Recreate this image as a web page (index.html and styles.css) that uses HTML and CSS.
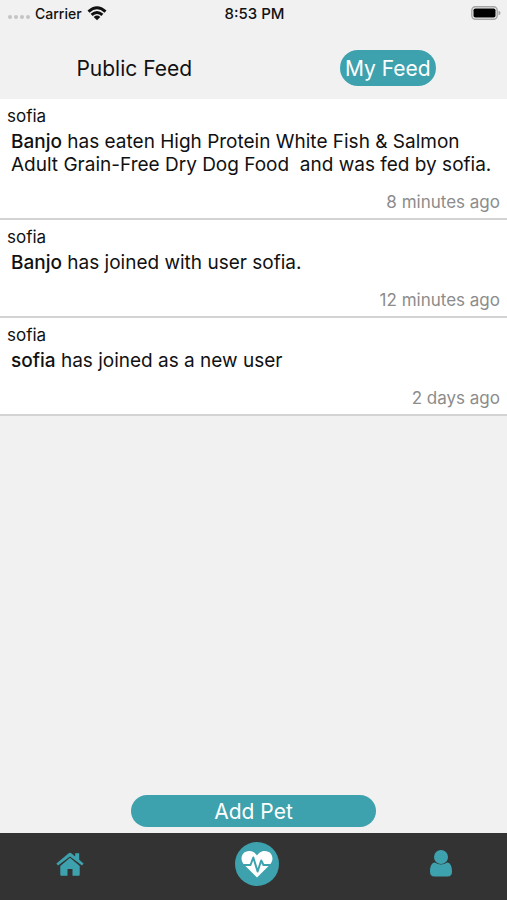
FILE: index.html
```html
<!DOCTYPE html>
<html lang="en">
<head>
<meta charset="utf-8">
<meta name="viewport" content="width=device-width, initial-scale=1">
<title>My Feed</title>
<link rel="stylesheet" href="styles.css">
</head>
<body>
<div class="status">
  <div class="carrier">
    <span class="dots"><i></i><i></i><i></i><i></i></span>
    <span>Carrier</span>
    <svg class="wifi" viewBox="0 0 20 15" aria-hidden="true">
      <path d="M1.500 5.600Q10-2.200 18.500 5.600M4.600 8.900Q10 4 15.400 8.900" fill="none" stroke="#111" stroke-width="3"/>
      <path d="M6.700 10.900Q10 8.100 13.300 10.900L10 14.200Z" fill="#111"/>
    </svg>
  </div>
  <span class="time">8:53 PM</span>
  <svg class="battery" viewBox="0 0 30 14" aria-hidden="true">
    <rect x="0.800" y="0.800" width="25.400" height="12.400" rx="3.600" fill="#f1f1f1" stroke="#a5a5a5" stroke-width="1.400"/>
    <rect x="2.500" y="2.500" width="22" height="9" rx="1.800" fill="#000"/>
    <path d="M27.500 4.800Q29.500 5.200 29.500 7T27.500 9.200Z" fill="#a5a5a5"/>
  </svg>
</div>
<header class="tabs">
  <button class="tab" type="button">Public Feed</button>
  <button class="tab active" type="button">My Feed</button>
</header>
<main class="feed">
  <article class="post">
    <div class="name">sofia</div>
    <p class="message"><b>Banjo</b> has eaten High Protein White Fish &amp; Salmon Adult Grain-Free Dry Dog Food&nbsp; and was fed by sofia.</p>
    <div class="ago">8 minutes ago</div>
  </article>
  <article class="post">
    <div class="name">sofia</div>
    <p class="message"><b>Banjo</b> has joined with user sofia.</p>
    <div class="ago">12 minutes ago</div>
  </article>
  <article class="post">
    <div class="name">sofia</div>
    <p class="message"><b>sofia</b> has joined as a new user</p>
    <div class="ago">2 days ago</div>
  </article>
</main>
<button class="add" type="button">Add Pet</button>
<nav class="nav">
  <a href="#home" aria-label="Home">
    <svg class="home" viewBox="0 0 28 24" aria-hidden="true">
      <path d="M14 5.800L4.300 14V22.800Q4.300 23.800 5.300 23.800H11.500V17H16.500V23.800H22.700Q23.700 23.800 23.700 22.800V14Z"/>
      <path d="M12.400 1.400Q14 .2 15.600 1.400L19.200 4.400V1.200H23.200V7.700L27.600 11.400L26 13.400L14 4.500L2 13.400L.4 11.400Z"/>
    </svg>
  </a>
  <a href="#health" aria-label="Pet health" class="pulse">
    <svg viewBox="0 0 44 44" aria-hidden="true">
      <path d="M22 35.500L8.900 22.400C4.300 17.500 6.600 9 14.200 9C18.600 9 20.600 11.700 22 13.500C23.400 11.700 25.400 9 29.800 9C37.400 9 39.700 17.500 35.100 22.400Z" fill="#fff"/>
      <path d="M6 23H15.500L18.300 15.500L22.600 29.500L26.200 18.500L28.500 23H38" fill="none" stroke="#3ea2ae" stroke-width="2" stroke-linejoin="round"/>
    </svg>
  </a>
  <a href="#profile" aria-label="Profile">
    <svg class="user" viewBox="0 0 22 27" aria-hidden="true">
      <circle cx="11" cy="7" r="7"/>
      <path d="M4.800 12.600Q11 16.400 17.200 12.600C20.500 12.900 22 16.500 22 21.500Q22 26.600 17.500 26.600H4.500Q0 26.600 0 21.500C0 16.500 1.500 12.900 4.800 12.600Z"/>
    </svg>
  </a>
</nav>
</body>
</html>
```
FILE: styles.css
```css
* { box-sizing: border-box; }

body {
  margin: 0;
  min-height: 100vh;
  display: flex;
  flex-direction: column;
  background: #f1f1f1;
  color: #111;
  font-family: Inter, "Liberation Sans", sans-serif;
}

button {
  border: 0;
  padding: 0;
  background: none;
  color: inherit;
  font: inherit;
}

svg { display: block; }

.status {
  display: grid;
  grid-template-columns: 1fr auto 1fr;
  align-items: center;
  height: 26px;
  padding: 0 6px 0 8px;
  font-size: 14px;
  font-weight: 500;
}

.carrier {
  display: flex;
  align-items: center;
  gap: 5px;
}

.dots {
  display: flex;
  gap: 2px;
  padding-top: 8px;
}

.dots i {
  width: 4px;
  height: 4px;
  border-radius: 50%;
  background: #c4c4c4;
}

.wifi { width: 20px; height: 15px; }

.time { font-size: 15px; }

.battery {
  width: 30px;
  height: 14px;
  justify-self: end;
}

.tabs {
  display: flex;
  justify-content: space-around;
  align-items: center;
  height: 73px;
  padding-top: 11px;
}

.tab {
  height: 36px;
  padding: 0 5px;
  border-radius: 18px;
  font-size: 21px;
}

.active {
  background: #3ea2ae;
  color: #fff;
}

.feed { flex: 1; }

.post {
  padding: 7px 7px 5px;
  background: #fff;
  border-bottom: 2px solid #d3d3d3;
}

.name {
  font-size: 17px;
  line-height: 20px;
}

.message {
  margin: 4px 4px 15px;
  font-size: 19px;
  line-height: 23px;
}

.message b { font-weight: 500; }

.ago {
  color: #8c8c8c;
  font-size: 17px;
  line-height: 22px;
  text-align: right;
}

.add {
  align-self: center;
  width: 48.4%;
  height: 32px;
  margin-bottom: 6px;
  border-radius: 16px;
  background: #3ea2ae;
  color: #fff;
  font-size: 21px;
}

.nav {
  display: flex;
  justify-content: space-between;
  align-items: center;
  height: 67px;
  padding: 0 55px 6px 56px;
  background: #333;
  fill: #3ea2ae;
}

.home { width: 28px; height: 24px; }

.user { width: 22px; height: 27px; }

.pulse {
  width: 44px;
  height: 44px;
  border-radius: 50%;
  background: #3ea2ae;
}
```
